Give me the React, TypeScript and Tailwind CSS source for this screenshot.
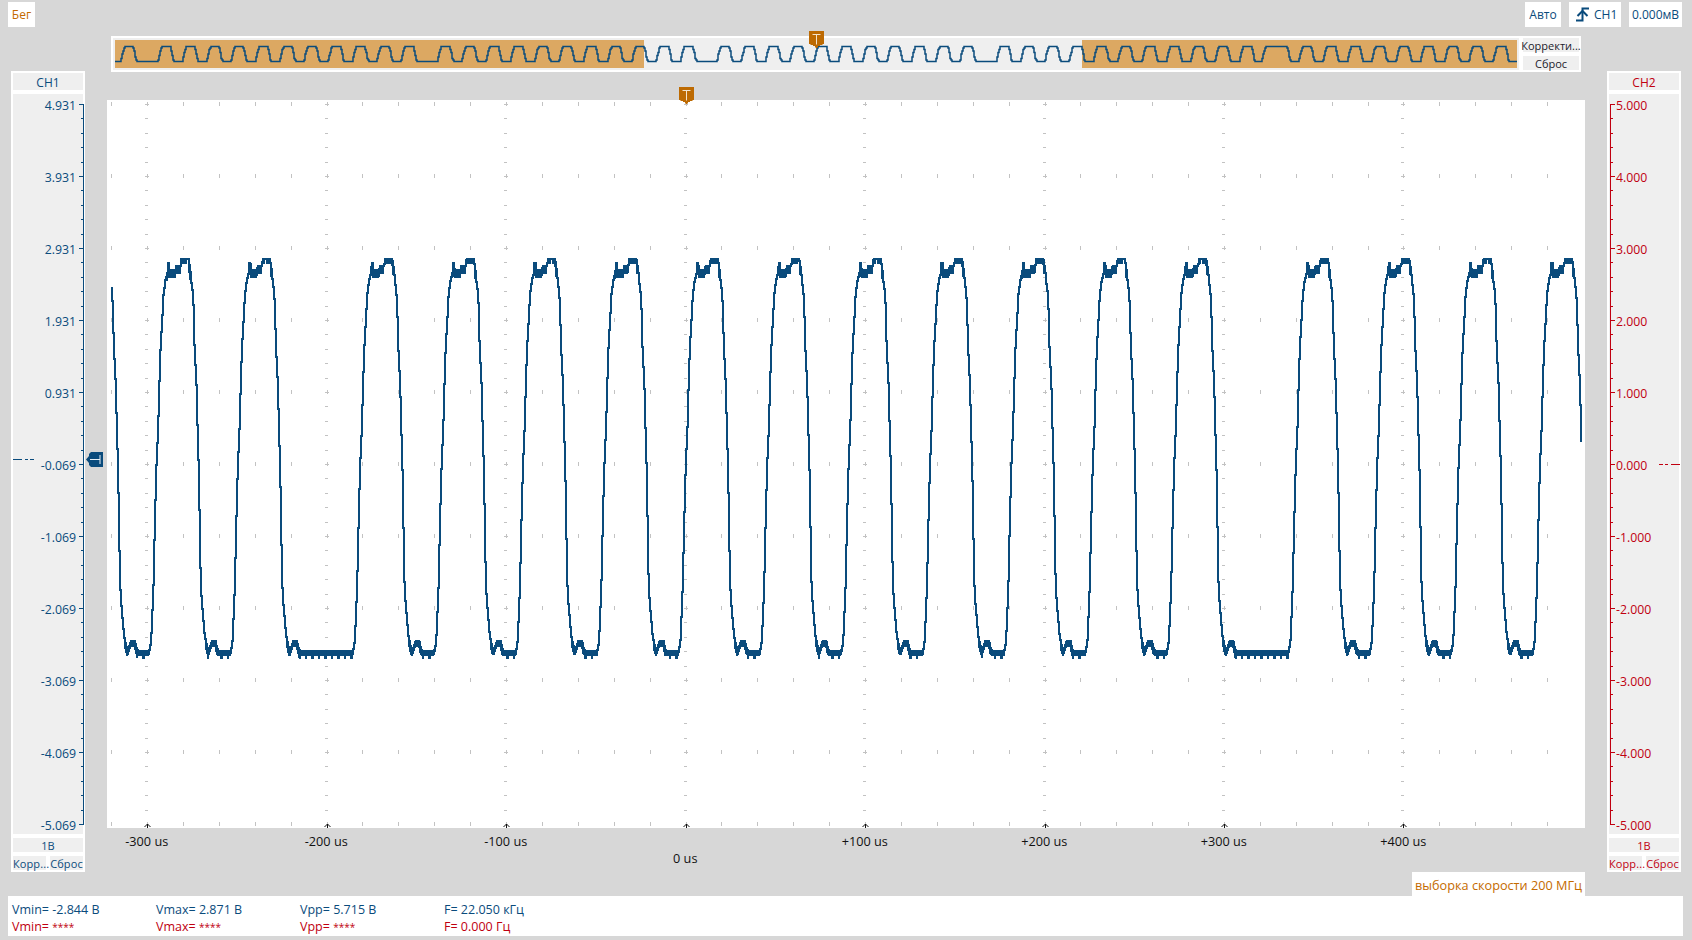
import React from "react";

const BLUE = "#0a4b7c";
const RED = "#c00010";

// One pulse of the trace: offset from the rising zero crossing, level on the main plot
const RISE: [number, number][] = [
  [-7.5, 651], [-6.5, 649], [-5.3, 640], [-4, 610], [-3, 585], [-2, 540], [-1, 500], [0, 465], [1.7, 427], [2.7, 390], [4, 350], [5, 332],
  [6, 315], [7, 295], [9, 280], [11, 273], [11.5, 263], [12.5, 263], [13, 270], [19, 270], [20, 266], [24, 266], [25, 259], [32, 259],
];
const FALL: [number, number][] = [
  [33, 265], [34, 272], [35, 283], [36, 290], [37, 305], [38, 345], [40, 385], [41, 425], [42.3, 470], [43, 510], [44.2, 580], [45.2, 600],
  [46.9, 620], [48.2, 635], [49.9, 644], [50.9, 648], [52.2, 651], [55.5, 641], [59.2, 641], [60, 646], [61.2, 650], [62.5, 651],
];

type Pulse = { x: number; wide?: number };

function tracePath(
  pulses: Pulse[],
  from: number,
  to: number,
  sx: number,
  mapY: (y: number) => number,
  qy: number,
  noise: boolean,
) {
  const pts: [number, number][] = [];
  pulses.forEach((p) => {
    RISE.forEach(([d, y]) => pts.push([p.x + d * sx, y]));
    FALL.forEach(([d, y]) => pts.push([p.x + d * sx + (p.wide ?? 0), y]));
  });
  let i = 0;
  let out = "";
  const levelAt = (x: number) => {
    while (i < pts.length - 2 && pts[i + 1][0] < x) i++;
    const [x0, y0] = pts[i];
    const [x1, y1] = pts[i + 1];
    if (x <= x0) return y0;
    if (x >= x1) return y1;
    return y0 + ((y1 - y0) * (x - x0)) / (x1 - x0);
  };
  for (let x = from; x <= to; x++) {
    const raw = levelAt(x);
    const y = Math.round(mapY(raw) / qy) * qy;
    out += out ? `H${x}V${y}` : `M${x} ${y}`;
    if (noise) {
      const h = (x * 7919) % 13;
      if (raw >= 650) {
        out += `V${y + 4.5}`;
        if (h < 3) out += `V${y + 8}`;
        out += `V${y}`;
      } else if (raw >= 640 && raw < 650) {
        out += `V${y + 6}V${y}`;
      } else if (raw >= 265 && raw <= 273) {
        out += `V${y + 8}V${y}`;
      } else if (raw <= 262) {
        if (h < 10) out += `V${y + 5}V${y}`;
      }
    }
  }
  return out;
}

const mainPulses: Pulse[] = [
  { x: 75.3 },
  { x: 156 },
  { x: 237.4 },
  ...Array.from({ length: 11 }, (_, n) => ({ x: 359.7 + 81.4 * n })),
  ...Array.from({ length: 4 }, (_, n) => ({ x: 1295.3 + 81.4 * n })),
];

const T = 24.3;
const overviewPulses: Pulse[] = [
  { x: 122 },
  ...[159.3, 438.7, 718.1, 997.5].flatMap((s) => Array.from({ length: 11 }, (_, n) => ({ x: s + T * n }))),
  { x: 1263, wide: 13 },
  ...Array.from({ length: 9 }, (_, n) => ({ x: 1300 + T * n })),
];

const mainPath = tracePath(mainPulses, 111, 1581, 1, (y) => y, 1, true);
const overviewPath = tracePath(overviewPulses, 115, 1517, T / 81.4, (y) => 46 + ((y - 259) / 393) * 15.5, 1.5, false);

const COLS = Array.from({ length: 41 }, (_, k) => 111.1 + 35.9 * k);
const ROWS = Array.from({ length: 11 }, (_, i) => 104 + 72 * i);
const MAJOR_LABELS = ["-300 us", "-200 us", "-100 us", "0 us", "+100 us", "+200 us", "+300 us", "+400 us"];

function Grid() {
  const d: string[] = [];
  COLS.forEach((x, k) => {
    const major = k % 5 === 1;
    const xi = Math.round(x);
    ROWS.forEach((y) => {
      d.push(`M${xi} ${y - 2}V${y + 2}`);
      if (major && y < 824) {
        d.push(`M${xi - 2} ${y}H${xi + 2}`);
      }
    });
    if (major) {
      for (let m = 0; m < 50; m++) {
        if (m % 5 === 0) continue;
        const y = Math.round(104 + m * 14.4);
        d.push(`M${xi - 2} ${y}H${xi + 1}`);
      }
    }
  });
  const arrows = COLS.filter((_, k) => k % 5 === 1).map((x) => {
    const xi = Math.round(x) + 0.5;
    return `M${xi} 828V824M${xi - 3} 827L${xi} 824L${xi + 3} 827`;
  });
  return (
    <>
      <path d={d.join("")} stroke="#c2c2c2" strokeWidth={1} fill="none" shapeRendering="crispEdges" />
      <path d={arrows.join("")} stroke="#111" strokeWidth={1} fill="none" />
    </>
  );
}

function TMarker({ className }: { className: string }) {
  return (
    <svg className={className} viewBox="0 0 15 17" width="15" height="17">
      <path d="M0 0H15V13H13.5V14H11V15H9V16H8.5V17H6.5V16H6V15H4V14H1.5V13H0Z" fill="#bd6a02" />
      <path d="M3.5 3.5H11.5M7.5 3.5V13.5" stroke="#f3e3cc" strokeWidth={1} fill="none" />
    </svg>
  );
}

function ticks(side: "left" | "right") {
  const d: string[] = [];
  const axis = side === "left" ? 83.8 : 1610;
  const dir = side === "left" ? -1 : 1;
  d.push(`M${axis} 104V824`);
  for (let m = 0; m <= 50; m++) {
    const y = Math.round(104 + m * 14.4);
    const len = m % 5 === 0 ? 5 : 2.5;
    d.push(`M${axis} ${y}H${axis + dir * len}`);
  }
  return d.join("");
}

const PANEL_LABELS_L = ["4.931", "3.931", "2.931", "1.931", "0.931", "-0.069", "-1.069", "-2.069", "-3.069", "-4.069", "-5.069"];
const PANEL_LABELS_R = ["5.000", "4.000", "3.000", "2.000", "1.000", "0.000", "-1.000", "-2.000", "-3.000", "-4.000", "-5.000"];

function LeftPanel() {
  return (
    <div className="flex h-[801px] w-[74px] flex-col gap-[4px] bg-white p-[2px] text-[#0a4b7c]">
      <div className="flex h-[17px] items-center justify-center bg-[#efefef] pt-[2px] text-[12px]">CH1</div>
      <div className="relative flex h-[740px] flex-col items-end gap-[56px] bg-[#efefef] pr-[7px] pt-[4px] text-[12.3px]">
        {PANEL_LABELS_L.map((l) => (
          <div key={l} className="h-[16px] leading-[16px]">{l}</div>
        ))}
        <svg className="absolute left-0 top-0 overflow-visible" width="70" height="740" viewBox="13 94 70 740">
          <path d={ticks("left")} stroke={BLUE} strokeWidth={1} fill="none" shapeRendering="crispEdges" />
          <path d="M13 459.5H22M25 459.5H28M30 459.5H34" stroke={BLUE} strokeWidth={1} fill="none" shapeRendering="crispEdges" />
        </svg>
      </div>
      <div className="flex h-[14px] items-center justify-center bg-[#efefef] pt-[2px] text-[11px]">1В</div>
      <div className="flex h-[14px] justify-between text-[11px] leading-[15px] tracking-[0.1px]">
        <div className="w-[33px] whitespace-nowrap bg-[#efefef] text-center">Корр...</div>
        <div className="w-[33px] whitespace-nowrap bg-[#efefef] text-center">Сброс</div>
      </div>
    </div>
  );
}

function RightPanel() {
  return (
    <div className="flex h-[801px] w-[74px] flex-col gap-[4px] bg-white p-[2px] text-[#c00010]">
      <div className="flex h-[17px] items-center justify-center bg-[#efefef] pt-[2px] text-[12px]">CH2</div>
      <div className="relative flex h-[740px] flex-col items-start gap-[56px] bg-[#efefef] pl-[7px] pt-[4px] text-[12.3px]">
        {PANEL_LABELS_R.map((l) => (
          <div key={l} className="h-[16px] leading-[16px]">{l}</div>
        ))}
        <svg className="absolute left-0 top-0 overflow-visible" width="70" height="740" viewBox="1609 94 70 740">
          <path d={ticks("right")} stroke={RED} strokeWidth={1} fill="none" shapeRendering="crispEdges" />
          <path d="M1659 464.5H1663M1665 464.5H1668M1671 464.5H1680" stroke={RED} strokeWidth={1} fill="none" shapeRendering="crispEdges" />
        </svg>
      </div>
      <div className="flex h-[14px] items-center justify-center bg-[#efefef] pt-[2px] text-[11px]">1В</div>
      <div className="flex h-[14px] justify-between text-[11px] leading-[15px] tracking-[0.1px]">
        <div className="w-[33px] whitespace-nowrap bg-[#efefef] text-center">Корр...</div>
        <div className="w-[33px] whitespace-nowrap bg-[#efefef] text-center">Сброс</div>
      </div>
    </div>
  );
}

function Overview() {
  return (
    <div className="relative flex h-[36px] w-[1470px] justify-between bg-white p-[2px] pr-[2px]">
      <div className="h-[32px] w-[1406px] bg-[#efefef]">
        <svg width="1406" height="32" viewBox="113 38 1406 32">
          <rect x="115" y="40" width="529" height="28" fill="#dca862" />
          <rect x="1082" y="40" width="435" height="28" fill="#dca862" />
          <path d={overviewPath} stroke={BLUE} strokeWidth={1.5} fill="none" />
        </svg>
      </div>
      <div className="flex w-[56px] flex-col gap-[4px] text-[11px] leading-[16px] text-[#1c1c2c]">
        <div className="flex h-[14px] justify-center whitespace-nowrap bg-[#efefef]">Корректи...</div>
        <div className="h-[14px] bg-[#efefef] text-center">Сброс</div>
      </div>
      <TMarker className="absolute left-[698px] top-[-5px]" />
    </div>
  );
}

function Plot() {
  return (
    <div className="relative h-[728px] w-[1478px] bg-white">
      <svg className="block" width="1478" height="728" viewBox="107 100 1478 728">
        <Grid />
        <path d={mainPath} stroke={BLUE} strokeWidth={1.5} fill="none" shapeRendering="crispEdges" />
      </svg>
      <TMarker className="absolute left-[572px] top-[-13px]" />
      <svg className="absolute left-[-21px] top-[352px]" width="17" height="15" viewBox="0 0 17 15">
        <path d="M0 7.5L3 4V2L5 0H17V15H5L3 13V11Z" fill={BLUE} />
        <path d="M4 7.5H14M14 3V12" stroke="#e8f0f6" strokeWidth={1} fill="none" />
      </svg>
    </div>
  );
}

function Measure({ color, rows }: { color: string; rows: [string, string][] }) {
  return (
    <div className={`flex h-[17px] items-center text-[12.5px] ${color}`}>
      {rows.map(([a, b]) => (
        <div key={a} className="w-[144px] whitespace-pre">
          {a}
          <span className={b === "****" ? "text-[10px]" : ""}>{b}</span>
        </div>
      ))}
    </div>
  );
}

export default function App() {
  return (
    <div className="flex h-[940px] w-[1692px] flex-col overflow-hidden bg-[#d7d7d7] font-['Open_Sans','Noto_Sans',sans-serif]">
      <div className="flex h-[27px] items-end justify-between pl-[8px] pr-[10px] text-[12px]">
        <div className="flex h-[25px] w-[27px] items-center justify-center bg-white pt-[1px] text-[#c46a00]">Бег</div>
        <div className="flex gap-[8px] text-[#0a4b7c]">
          <div className="flex h-[25px] w-[36px] items-center justify-center bg-white pt-[1px]">Авто</div>
          <div className="flex h-[25px] w-[52px] items-center gap-[5px] bg-white pl-[7px]">
            <svg width="13" height="15" viewBox="0 0 13 15">
              <path d="M0 13.5H6.5V1.5H13" stroke={BLUE} strokeWidth={2} fill="none" />
              <path d="M1.5 9L6.5 4L11.5 9" stroke={BLUE} strokeWidth={2} fill="none" />
            </svg>
            <span className="pt-[1px]">CH1</span>
          </div>
          <div className="flex h-[25px] w-[53px] items-center justify-center whitespace-nowrap bg-white pt-[1px]">0.000мВ</div>
        </div>
      </div>

      <div className="flex h-[869px] pl-[11px]">
        <div className="pt-[44px]">
          <LeftPanel />
        </div>
        <div className="ml-[22px] flex w-[1478px] flex-col">
          <div className="ml-[4px] mt-[9px]">
            <Overview />
          </div>
          <div className="mt-[28px]">
            <Plot />
          </div>
          <div className="ml-[-50px] flex h-[44px] text-[12.7px] text-[#111]">
            {MAJOR_LABELS.map((l) => (
              <div key={l} className={`w-[179.5px] text-center leading-[16px] ${l === "0 us" ? "pt-[22px]" : "pt-[5px]"}`}>{l}</div>
            ))}
          </div>
          <div className="flex h-[24px] w-[173px] items-center justify-center self-end whitespace-nowrap bg-white pt-[3px] text-[12.7px] text-[#c46a00]">
            выборка скорости 200 МГц
          </div>
        </div>
        <div className="ml-[22px] pt-[44px]">
          <RightPanel />
        </div>
      </div>

      <div className="ml-[8px] flex h-[40px] w-[1675px] flex-col justify-center bg-white pl-[4px] pt-[6px]">
        <Measure color="text-[#0a4b7c]" rows={[["Vmin= ", "-2.844 В"], ["Vmax= ", "2.871 В"], ["Vpp= ", "5.715 В"], ["F= ", "22.050 кГц"]]} />
        <Measure color="text-[#c00010]" rows={[["Vmin= ", "****"], ["Vmax= ", "****"], ["Vpp= ", "****"], ["F= ", "0.000 Гц"]]} />
      </div>
    </div>
  );
}
